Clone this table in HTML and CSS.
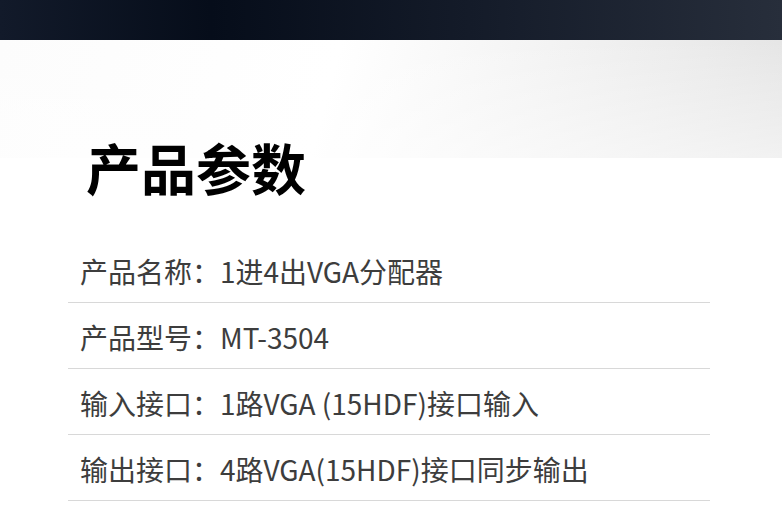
FILE: index.html
```html
<!DOCTYPE html>
<html lang="zh-CN">
<head>
    <meta charset="UTF-8">
    <title>产品参数</title>
    <link rel="stylesheet" href="styles.css">
</head>
<body>
<div class="topbar"></div>
<div class="section">
    <h1 class="title">产品参数</h1>
    <ul class="params">
        <li>产品名称：1进4出VGA分配器</li>
        <li>产品型号：MT-3504</li>
        <li>输入接口：1路VGA (15HDF)接口输入</li>
        <li>输出接口：4路VGA(15HDF)接口同步输出</li>
    </ul>
</div>
</body>
</html>
```

FILE: styles.css
```css
* {
    margin: 0;
    padding: 0
}
body {
    background: #fff;
    font-family: "Noto Sans CJK SC", "Noto Sans", sans-serif;
    overflow: hidden;
}
.topbar {
    height: 40px;
    background: linear-gradient(90deg, #121a2a 0%, #060d1a 27%, #141b29 60%, #272e3b 100%);
}
.section {
    padding: 98px 72px 0 68px;
    background:
        linear-gradient(180deg, rgba(255,255,255,0) 0%, rgba(255,255,255,0.5) 118px, transparent 118px),
        linear-gradient(105deg, #fcfcfc 0%, #fff 42%, #f1f1f1 72%, #e4e4e4 100%) top left / 100% 118px no-repeat;
}
.title {
    font-size: 55px;
    line-height: 56px;
    font-weight: 700;
    color: #000;
    padding-left: 18px;
}
.params {
    list-style: none;
    margin-top: 43px;
}
.params li {
    display: flex;
    align-items: center;
    padding: 2px 0 0 12px;
    box-sizing: border-box;
    height: 66px;
    border-bottom: 1px solid #d8d8d8;
    font-size: 28px;
    font-weight: 400;
    color: #3d3d3d;
}
```
